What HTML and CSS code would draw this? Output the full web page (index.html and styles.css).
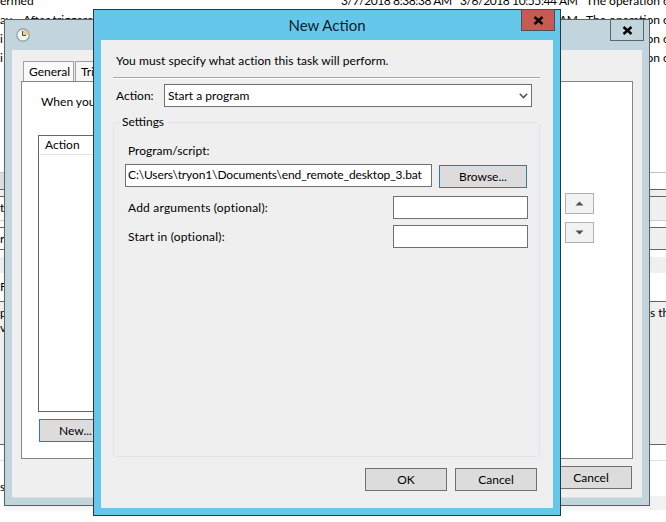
FILE: index.html
```html
<!DOCTYPE html>
<html lang="en">
<head>
<meta charset="utf-8">
<title>New Action</title>
<link rel="stylesheet" href="styles.css">
</head>
<body>
<div class="desk">
  <div class="rows">
    <div class="row"><span class="c1">ermed</span><span class="c3">3/7/2018 8:38:38 AM</span><span class="c4">3/6/2018 10:55:44 AM</span><span class="c5">The operation completed</span></div>
    <div class="row"><span class="c1">ay</span><span class="c2">After triggered</span><span class="c3">3/7/2018 8:38:38 AM</span><span class="c4">3/6/2018 10:55:44 AM</span><span class="c5">The operation completed</span></div>
    <div class="row"><span class="c1">i</span><span class="c5">The operation completed</span></div>
    <div class="row"><span class="c1">i</span><span class="c5">The operation completed</span></div>
  </div>
  <div class="bands">
    <div class="side">
      <div class="b b-key"></div>
      <div class="b b-thin"></div>
      <div class="b b-r1">t</div>
      <div class="b b-r2"></div>
      <div class="b b-r3">r</div>
      <div class="b b-r4"></div>
      <div class="b b-r5"></div>
      <div class="b b-r6">F</div>
      <div class="b b-pane">p<br>v</div>
      <div class="b b-r7"></div>
      <div class="b b-r8">s</div>
    </div>
    <div class="side side-r">
      <div class="b b-key-r"></div>
      <div class="b b-thin"></div>
      <div class="b b-r1 grey"></div>
      <div class="b b-r2"></div>
      <div class="b b-r3 grey"></div>
      <div class="b b-r4"></div>
      <div class="b b-r5"></div>
      <div class="b b-r6"></div>
      <div class="b b-pane">s the task</div>
      <div class="b b-r7"></div>
      <div class="b b-r8r"></div>
      <div class="b b-shadow"></div>
    </div>
  </div>

  <section class="win win-back">
    <header class="bar">
      <svg class="clock" width="14" height="14" viewBox="0 0 14 14">
        <circle cx="7" cy="7" r="6.2" fill="#f2f4f5" stroke="#8f9aa0" stroke-width="1.2"/>
        <path d="M7 7V1.6A5.4 5.4 0 0 1 12.4 7Z" fill="#eccb7c"/>
        <path d="M6.5 3v4.5H10" fill="none" stroke="#3d5566" stroke-width="1"/>
      </svg>
      <button class="close close-back"><svg width="11" height="9" viewBox="0 0 11 9"><path d="M1.5 1l8 7M9.5 1l-8 7" stroke="#000" stroke-width="2.4"/></svg></button>
    </header>
    <div class="client client-back">
      <div class="tabs"><span class="tab tab-on">General</span><span class="tab">Triggers</span></div>
      <div class="pane">
        <p class="when">When you create a task, you must specify the action that will occur when your task starts.</p>
        <div class="list-row">
          <div class="list-col">
            <div class="list"><div class="list-head">Action</div></div>
            <button class="btn btn-blue btn-new">New...</button>
          </div>
          <div class="updown">
            <button class="arrow"><svg width="9" height="5" viewBox="0 0 9 5"><path d="M4.5 0.5L8.5 4.5H0.5Z" fill="#505050"/></svg></button>
            <button class="arrow"><svg width="9" height="5" viewBox="0 0 9 5"><path d="M0.5 0.5H8.5L4.5 4.5Z" fill="#505050"/></svg></button>
          </div>
        </div>
      </div>
      <div class="foot-back"><button class="btn btn-cancel-back">Cancel</button></div>
    </div>
  </section>

  <section class="win win-front">
    <header class="bar bar-front">
      <h1 class="title">New Action</h1>
      <button class="close close-front"><svg width="11" height="9" viewBox="0 0 11 9"><path d="M1.5 1l8 7M9.5 1l-8 7" stroke="#000" stroke-width="2.4"/></svg></button>
    </header>
    <div class="client client-front">
      <p class="intro">You must specify what action this task will perform.</p>
      <div class="sep"></div>
      <div class="action-row">
        <label class="action-label">Action:</label>
        <div class="select">Start a program
          <svg class="chev" width="9" height="6" viewBox="0 0 9 6"><path d="M0.8 0.8L4.5 4.5L8.2 0.8" fill="none" stroke="#555" stroke-width="1.6"/></svg>
        </div>
      </div>
      <fieldset class="group">
        <legend class="legend">Settings</legend>
        <div class="prog-label">Program/script:</div>
        <div class="prog-row">
          <div class="field field-prog">C:\Users\tryon1\Documents\end_remote_desktop_3.bat</div>
          <button class="btn btn-blue btn-browse">Browse...</button>
        </div>
        <div class="opt-row opt-first"><span class="opt-text">Add arguments (optional):</span><div class="field field-opt"></div></div>
        <div class="opt-row"><span class="opt-text">Start in (optional):</span><div class="field field-opt"></div></div>
      </fieldset>
      <div class="foot">
        <button class="btn btn-foot">OK</button>
        <button class="btn btn-foot">Cancel</button>
      </div>
    </div>
  </section>
</div>
</body>
</html>
```
FILE: styles.css
```css
* { box-sizing: border-box; }
html, body { margin: 0; padding: 0; }
body {
  width: 666px;
  height: 522px;
  overflow: hidden;
  background: #fff;
  color: #000;
  font: 12px/16px Lato, "Noto Sans", sans-serif;
}
.desk { position: relative; width: 666px; height: 522px; overflow: hidden; }

.rows { margin-top: -9px; height: 181px; position: relative; }
.row { display: flex; height: 19px; line-height: 19px; white-space: nowrap; position: relative; }
.c1 { position: absolute; left: 0; }
.c2 { position: absolute; left: 23px; }
.c3 { position: absolute; left: 341px; letter-spacing: -.4px; }
.c4 { position: absolute; left: 460px; letter-spacing: -.4px; }
.c5 { position: absolute; left: 586px; }

.bands { display: flex; position: absolute; left: 0; right: 0; top: 172px; }
.side { width: 40px; display: flex; flex-direction: column; line-height: 15px; overflow: hidden; }
.side-r { margin-left: auto; width: 16px; }
.side-r .b { white-space: nowrap; }
.b { flex: none; }
.b-key { height: 17px; background: #dedede; border-top: 1px solid #c8c8c8; }
.b-key-r { height: 17px; background: #fff; border-top: 1px solid #c4c4c4; }
.b-thin { height: 8px; background: #f0f0f0; border-top: 1px solid #666; border-bottom: 1px solid #666; }
.b-r1 { height: 24px; border-bottom: 1px solid #ccd; padding-top: 3px; }
.b-r2 { height: 6px; }
.b-r3 { height: 23px; border-top: 1px solid #666; border-bottom: 1px solid #666; padding-top: 3px; }
.b-r4 { height: 7px; }
.b-r5 { height: 16px; background: #f0f0f0; }
.b-r6 { height: 28px; padding-top: 6px; }
.b-pane { height: 144px; background: #f0f0f0; border-top: 1px solid #666; border-bottom: 1px solid #666; padding-top: 3px; }
.b-r7 { height: 16px; border-bottom: 1px solid #d5e5ef; }
.b-r8 { height: 45px; padding-top: 18px; }
.b-r8r { height: 35px; }
.b-shadow { height: 14px; background: #f2f2f2; }
.grey { background: #f0f0f0; }

.win { position: absolute; }
.win-back {
  left: 4px; top: 19px; width: 646px; height: 487px;
  background: #c3d5dc;
  border: 1px solid #5a6266;
  display: flex; flex-direction: column;
  box-shadow: 0 4px 4px rgba(0,0,0,.05);
}
.win-front {
  left: 93px; top: 9px; width: 468px; height: 507px;
  background: #65c8ea;
  border: 1px solid #2a3740;
  display: flex; flex-direction: column;
}
.bar { height: 30px; flex: none; display: flex; align-items: flex-start; position: relative; }
.bar-front { justify-content: center; }
.clock { margin: 8px 0 0 11px; }
.title { margin: 0; font-size: 15px; font-weight: 400; line-height: 30px; color: #10202c; }
.close {
  position: absolute; top: -1px;
  width: 34px; height: 22px;
  padding: 0; display: flex; align-items: center; justify-content: center;
  border: 1px solid #5c666c;
  background: #c3d5dc;
}
.close-back { right: 5px; }
.close-front { right: 5px; background: #c75b52; border-color: #4a4f55; }

.client { flex: 1; background: #efefef; }
.client-back {
  margin: 0 7px 7px 7px;
  display: flex; flex-direction: column;
  padding: 11px 9px 0 9px;
  border-bottom: 1px solid #d8dfe2;
}
.tabs { display: flex; height: 20px; margin-left: 2px; gap: 1px; }
.tab {
  width: 51px; height: 20px; padding-left: 5px;
  border: 1px solid #a0a0a6; border-bottom: none;
  background: #f6f6f6; line-height: 19px;
}
.tab-on { background: #fafafa; }
.pane { height: 378px; background: #fff; border: 1px solid #84848c; padding: 12px 16px 0 16px; }
.when { margin: 0; height: 41px; padding-left: 3px; white-space: nowrap; overflow: hidden; }
.list-row { display: flex; }
.list-col { width: 515px; }
.list { height: 277px; border: 1px solid #666; background: #fff; }
.list-head { height: 19px; padding-left: 6px; border-bottom: 1px solid #e2e2e2; line-height: 18px; }
.btn {
  display: block; padding: 0;
  font: inherit; color: #000; text-align: center;
  background: #dcdcdc; border: 1px solid #707070;
}
.btn-blue { border-color: #3a76a6; }
.btn-new { width: 73px; height: 23px; margin: 7px 0 0 1px; }
.updown { display: flex; flex-direction: column; gap: 8px; margin: 58px 0 0 12px; }
.arrow {
  width: 29px; height: 21px; padding: 0;
  display: flex; align-items: center; justify-content: center;
  background: #f2f2f2; border: 1px solid #b0b0b0;
}
.foot-back { display: flex; justify-content: flex-end; padding: 7px 1px 0 0; }
.btn-cancel-back { width: 82px; height: 23px; }

.client-front { margin: 0 7px 7px 7px; padding: 0 13px 0 12px; display: flex; flex-direction: column; position: relative; }
.intro { margin: 0; padding: 13px 3px 0; height: 37px; white-space: nowrap; letter-spacing: .06px; }
.sep { height: 2px; background: #a8a8a8; border-bottom: 1px solid #fff; }
.action-row { display: flex; align-items: center; margin-top: 5px; height: 23px; }
.action-label { width: 51px; padding: 1px 0 0 3px; }
.select {
  width: 368px; height: 23px; position: relative;
  padding-left: 3px; line-height: 21px;
  background: #fff; border: 1px solid #707070;
}
.chev { position: absolute; right: 3px; top: 8px; }
.group {
  margin: 7px 0 0 0; padding: 13px 11px 0 11px; height: 343px;
  border: 1px solid #dfe5ea; border-radius: 3px; min-width: 0;
}
.legend { padding: 0 3px 0 2px; margin-left: -5px; }
.prog-label { padding: 0 0 0 3px; height: 21px; }
.prog-row { display: flex; align-items: flex-start; gap: 7px; }
.field { height: 23px; background: #fff; border: 1px solid #707070; padding-left: 2px; line-height: 20px; white-space: nowrap; overflow: hidden; }
.field-prog { width: 307px; letter-spacing: -.12px; }
.btn-browse { width: 88px; height: 23px; margin-top: 1px; }
.opt-row { display: flex; justify-content: space-between; align-items: center; padding-left: 3px; margin-top: 6px; }
.opt-first { margin-top: 8px; }
.opt-text { letter-spacing: .2px; }
.field-opt { width: 135px; }
.foot { display: flex; justify-content: flex-end; gap: 8px; margin-top: 11px; padding-right: 3px; }
.btn-foot { width: 82px; height: 23px; }
```
